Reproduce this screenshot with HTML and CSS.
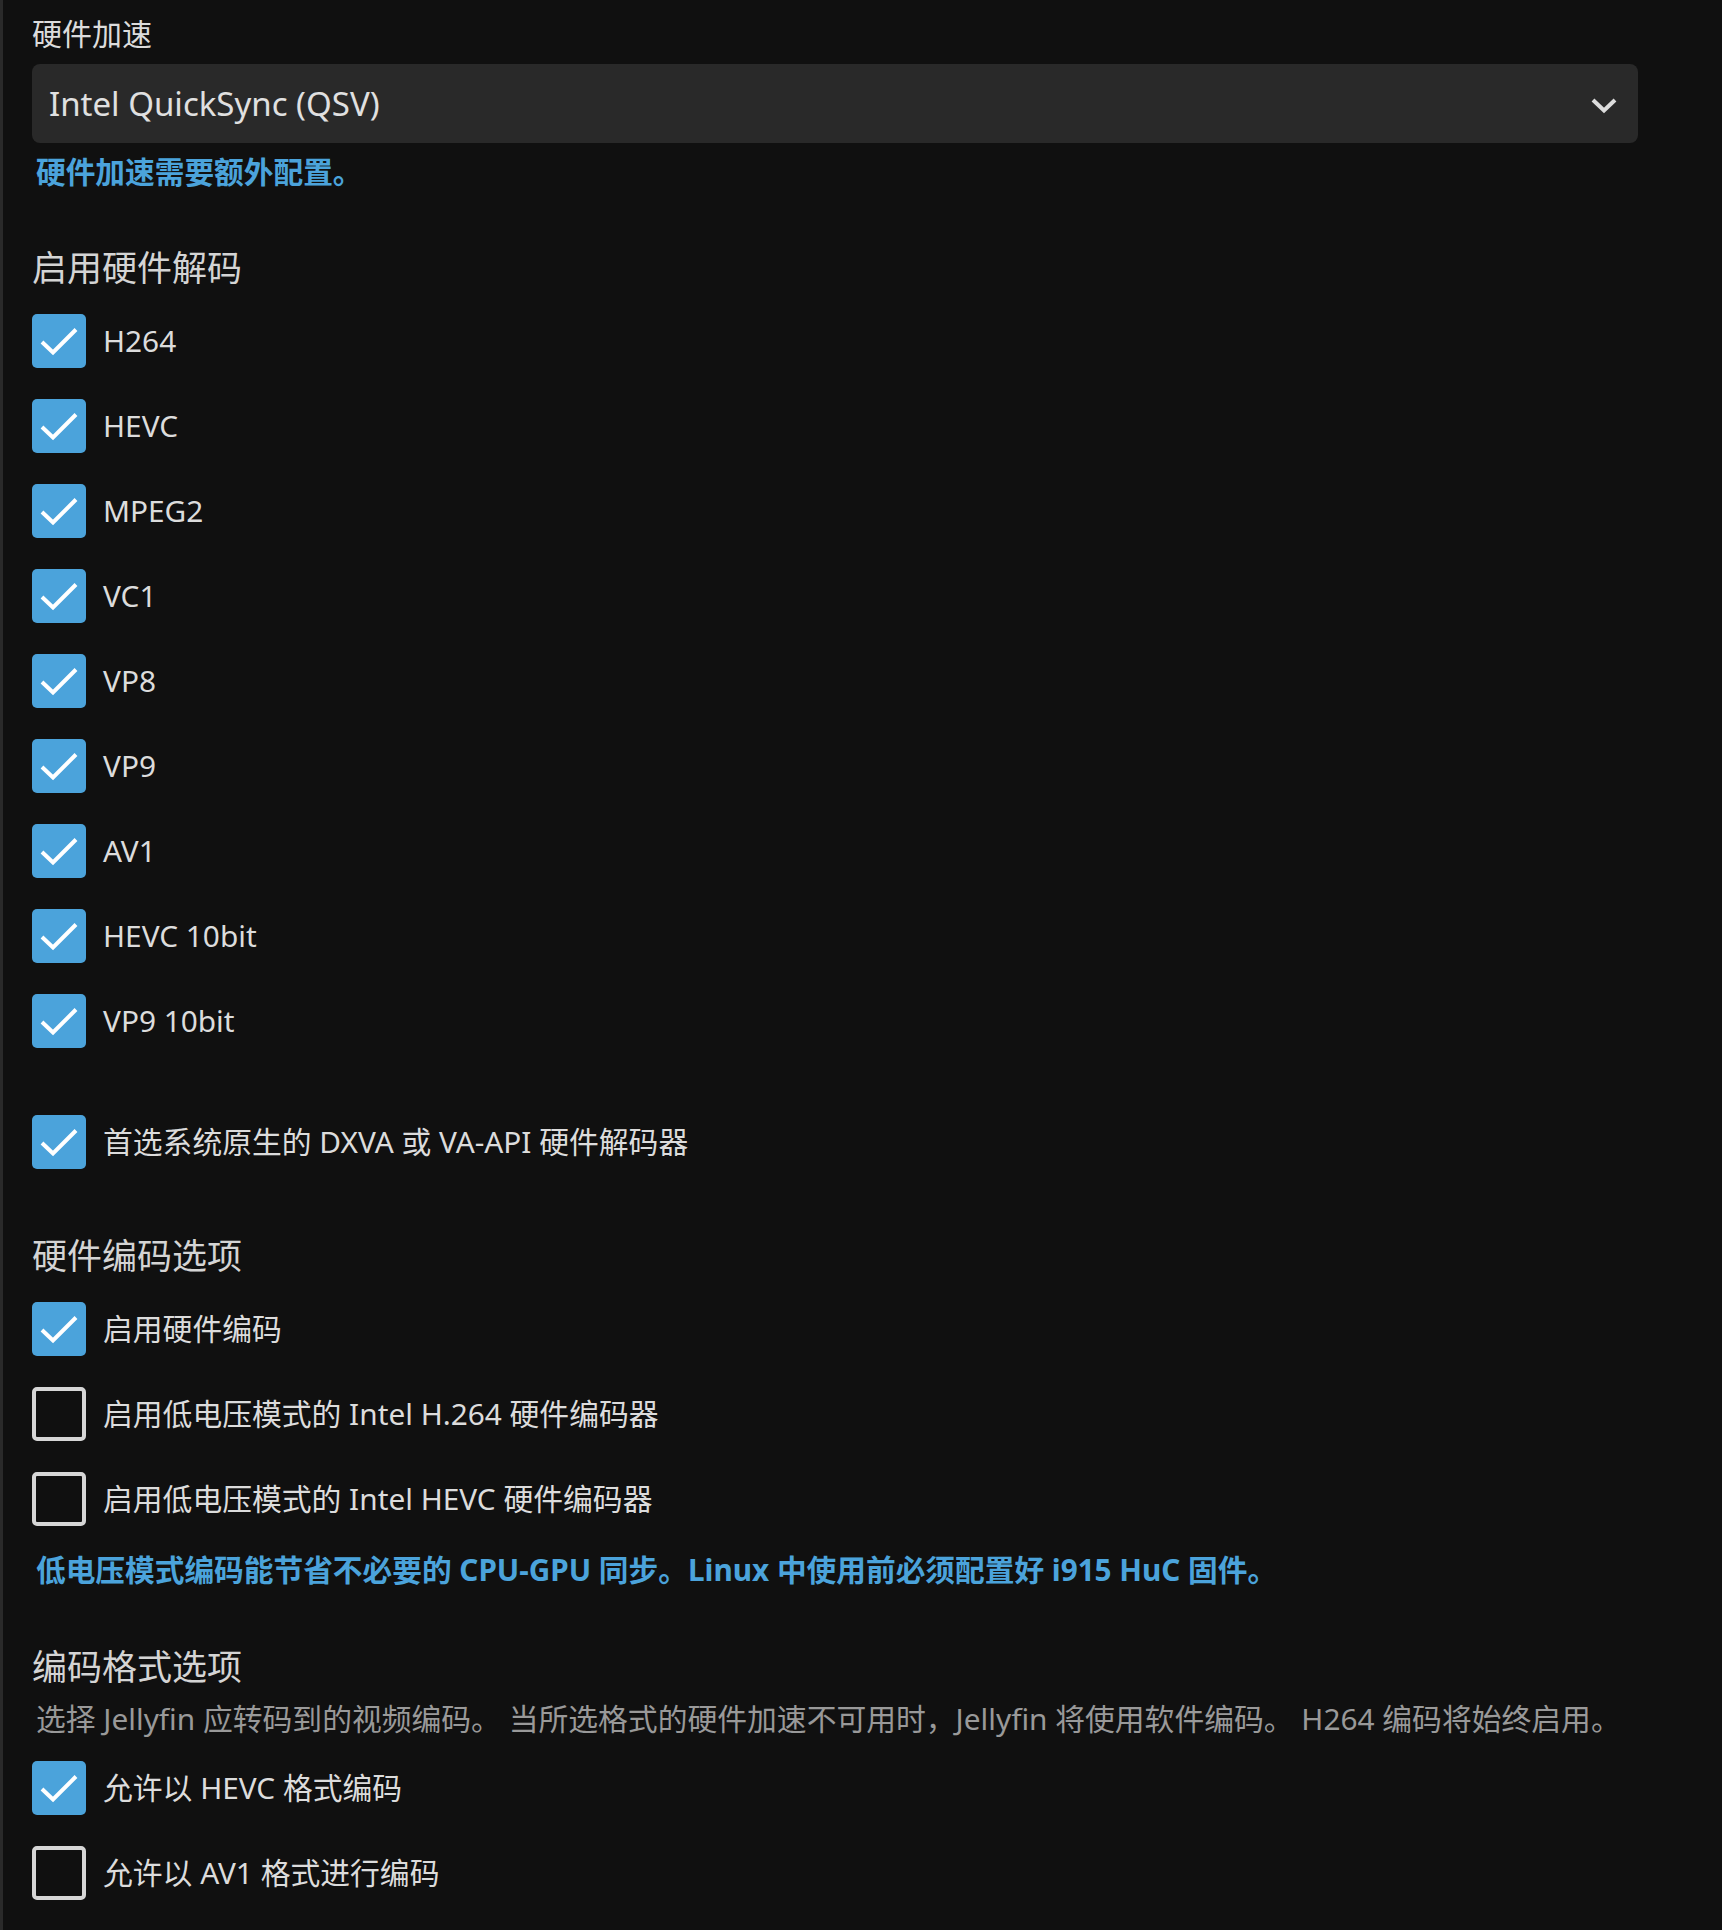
FILE: index.html
```html
<!DOCTYPE html>
<html lang="zh-CN">
<head>
    <meta charset="UTF-8">
    <meta name="viewport" content="width=device-width, initial-scale=1.0">
    <title>转码</title>
    <link rel="stylesheet" href="styles.css">
</head>
<body>
<div class="page">

    <div class="field-label">硬件加速</div>
    <div class="select">
        <span class="select-text">Intel QuickSync (QSV)</span>
        <svg class="chevron" width="26" height="16" viewBox="0 0 26 16">
            <path d="M2 2 L13 12.5 L24 2" fill="none" stroke="#dcdcdc" stroke-width="4"/>
        </svg>
    </div>
    <div class="field-note">硬件加速需要额外配置。</div>

    <h3 class="heading">启用硬件解码</h3>
    <div class="check-list">
        <label class="check-row"><span class="box on"><svg width="54" height="54" viewBox="0 0 54 54"><path d="M10 28 L21 38.5 L44 15.5" fill="none" stroke="#fff" stroke-width="4"/></svg></span>H264</label>
        <label class="check-row"><span class="box on"><svg width="54" height="54" viewBox="0 0 54 54"><path d="M10 28 L21 38.5 L44 15.5" fill="none" stroke="#fff" stroke-width="4"/></svg></span>HEVC</label>
        <label class="check-row"><span class="box on"><svg width="54" height="54" viewBox="0 0 54 54"><path d="M10 28 L21 38.5 L44 15.5" fill="none" stroke="#fff" stroke-width="4"/></svg></span>MPEG2</label>
        <label class="check-row"><span class="box on"><svg width="54" height="54" viewBox="0 0 54 54"><path d="M10 28 L21 38.5 L44 15.5" fill="none" stroke="#fff" stroke-width="4"/></svg></span>VC1</label>
        <label class="check-row"><span class="box on"><svg width="54" height="54" viewBox="0 0 54 54"><path d="M10 28 L21 38.5 L44 15.5" fill="none" stroke="#fff" stroke-width="4"/></svg></span>VP8</label>
        <label class="check-row"><span class="box on"><svg width="54" height="54" viewBox="0 0 54 54"><path d="M10 28 L21 38.5 L44 15.5" fill="none" stroke="#fff" stroke-width="4"/></svg></span>VP9</label>
        <label class="check-row"><span class="box on"><svg width="54" height="54" viewBox="0 0 54 54"><path d="M10 28 L21 38.5 L44 15.5" fill="none" stroke="#fff" stroke-width="4"/></svg></span>AV1</label>
        <label class="check-row"><span class="box on"><svg width="54" height="54" viewBox="0 0 54 54"><path d="M10 28 L21 38.5 L44 15.5" fill="none" stroke="#fff" stroke-width="4"/></svg></span>HEVC 10bit</label>
        <label class="check-row"><span class="box on"><svg width="54" height="54" viewBox="0 0 54 54"><path d="M10 28 L21 38.5 L44 15.5" fill="none" stroke="#fff" stroke-width="4"/></svg></span>VP9 10bit</label>
    </div>
    <div class="check-list spaced">
        <label class="check-row"><span class="box on"><svg width="54" height="54" viewBox="0 0 54 54"><path d="M10 28 L21 38.5 L44 15.5" fill="none" stroke="#fff" stroke-width="4"/></svg></span>首选系统原生的 DXVA 或 VA-API 硬件解码器</label>
    </div>

    <h3 class="heading second">硬件编码选项</h3>
    <div class="check-list">
        <label class="check-row"><span class="box on"><svg width="54" height="54" viewBox="0 0 54 54"><path d="M10 28 L21 38.5 L44 15.5" fill="none" stroke="#fff" stroke-width="4"/></svg></span>启用硬件编码</label>
        <label class="check-row"><span class="box"></span>启用低电压模式的 Intel H.264 硬件编码器</label>
        <label class="check-row"><span class="box"></span>启用低电压模式的 Intel HEVC 硬件编码器</label>
    </div>
    <div class="field-note after-list">低电压模式编码能节省不必要的 CPU-GPU 同步。Linux 中使用前必须配置好 i915 HuC 固件。</div>

    <h3 class="heading third">编码格式选项</h3>
    <div class="field-desc">选择 Jellyfin 应转码到的视频编码。 当所选格式的硬件加速不可用时，Jellyfin 将使用软件编码。 H264 编码将始终启用。</div>
    <div class="check-list after-desc">
        <label class="check-row"><span class="box on"><svg width="54" height="54" viewBox="0 0 54 54"><path d="M10 28 L21 38.5 L44 15.5" fill="none" stroke="#fff" stroke-width="4"/></svg></span>允许以 HEVC 格式编码</label>
        <label class="check-row"><span class="box"></span>允许以 AV1 格式进行编码</label>
    </div>

</div>
</body>
</html>
```

FILE: styles.css
```css
body {
    margin: 0;
    background-color: #101010;
    color: #dcdcdc;
    font-family: "Noto Sans", "Noto Sans CJK SC", sans-serif;
}
.page {
    min-height: 1930px;
    box-sizing: border-box;
    border-left: 3px solid #2a2a2a;
    padding: 14px 84px 0 29px;
}
.field-label {
    font-size: 30px;
    line-height: 40px;
}
.select {
    margin-top: 10px;
    height: 79px;
    background: #292929;
    border-radius: 8px;
    display: flex;
    align-items: center;
    justify-content: space-between;
    padding: 0 21px 0 17px;
}
.select-text {
    font-size: 33px;
    color: #e0e0e0;
}
.chevron {
    margin-top: 4px;
}
.field-note {
    margin-top: 9px;
    font-size: 29.7px;
    line-height: 40px;
    font-weight: bold;
    color: #4ba3db;
    padding-left: 4px;
}
.field-note.after-list {
    margin-top: 24px;
}
.heading {
    margin: 53px 0 0;
    font-size: 35px;
    line-height: 46px;
    font-weight: normal;
    color: #d4d4d4;
}
.heading.second {
    margin-top: 64px;
}
.heading.third {
    margin-top: 54px;
}
.field-desc {
    margin-top: 9px;
    font-size: 29.8px;
    line-height: 40px;
    color: #999;
    padding-left: 4px;
}
.check-list {
    margin-top: 23px;
    display: flex;
    flex-direction: column;
    gap: 31px;
}
.check-list.spaced {
    margin-top: 67px;
}
.check-list.after-desc {
    margin-top: 22px;
}
.check-row {
    display: flex;
    align-items: center;
    gap: 17px;
    height: 54px;
    font-size: 29.8px;
    line-height: 40px;
}
.box {
    width: 54px;
    height: 54px;
    box-sizing: border-box;
    border: 4px solid #d6d6d6;
    border-radius: 5px;
    flex-shrink: 0;
}
.box.on {
    background: #4ba3db;
    border: none;
}
.box svg {
    display: block;
}
```
